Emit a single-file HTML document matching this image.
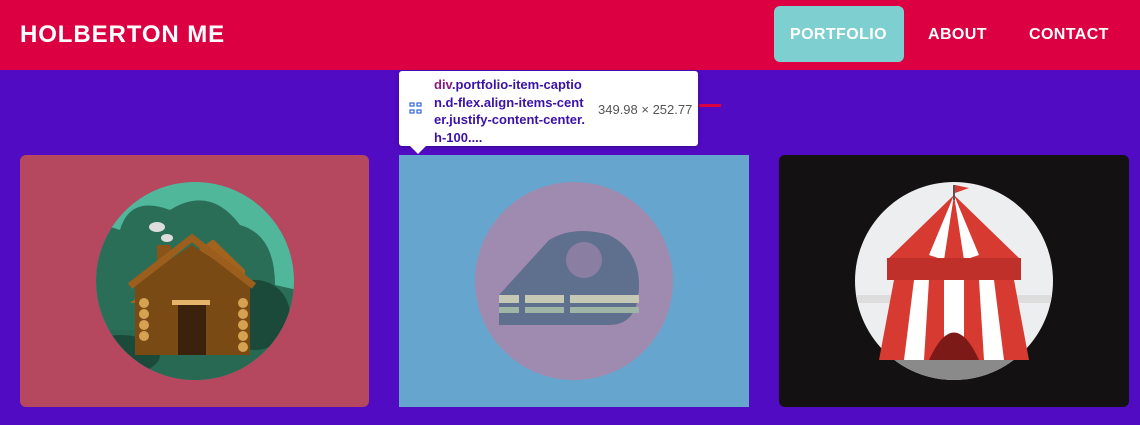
<!DOCTYPE html>
<html><head><style>
body{margin:0;width:1140px;height:425px;background:#500bc3;font-family:"Liberation Sans",sans-serif;position:relative;overflow:hidden}
.nav{position:absolute;left:0;top:0;width:1140px;height:70px;background:#dc0042}
.brand{position:absolute;left:20px;top:21px;color:#fff;font-weight:bold;font-size:24px;letter-spacing:0.9px}
.link{position:absolute;top:26px;color:#fff;font-weight:bold;font-size:16px;letter-spacing:0.4px}
.act{position:absolute;left:774px;top:6px;width:130px;height:56px;background:#7ecfcf;border-radius:6px}
.card{position:absolute;top:155px;height:252px;border-radius:6px;overflow:hidden}
.tip{position:absolute;left:399px;top:71px;width:299px;height:75px;background:#fff;border-radius:3px;box-shadow:0 1px 4px rgba(0,0,0,.3)}
.tip .t{position:absolute;left:35px;top:5px;width:155px;font-size:13px;font-weight:bold;color:#3b12a8;line-height:17.5px;word-break:break-all}
.tip .d{position:absolute;left:199px;top:31px;font-size:13px;color:#555}
.arr{position:absolute;left:410px;top:146px;width:0;height:0;border-left:8px solid transparent;border-right:8px solid transparent;border-top:8px solid #fff}
</style></head><body>
<div class="nav">
<div class="brand">HOLBERTON ME</div>
<div class="act"></div>
<div class="link" style="left:790px">PORTFOLIO</div>
<div class="link" style="left:928px">ABOUT</div>
<div class="link" style="left:1029px">CONTACT</div>
</div>
<div style="position:absolute;left:699px;top:104px;width:22px;height:3px;background:#dc0042"></div>

<div class="card" style="left:20px;width:349px;background:#b5475f">
<svg width="349" height="252"><defs><clipPath id="c1"><circle cx="175" cy="126" r="99"/></clipPath></defs>
<circle cx="175" cy="126" r="99" fill="#50b79b"/>
<g clip-path="url(#c1)">
<path d="M40 230 L40 100 Q60 60 100 75 Q110 40 150 55 Q190 30 220 70 Q255 80 255 130 L300 140 L300 230Z" fill="#2b6e58"/>
<rect x="40" y="175" width="260" height="60" fill="#286953"/>
<ellipse cx="235" cy="160" rx="35" ry="35" fill="#1c4a3a"/>
<ellipse cx="100" cy="200" rx="40" ry="20" fill="#1c4a3a"/>
</g>
<ellipse cx="137" cy="72" rx="8" ry="5" fill="#ddd"/><ellipse cx="147" cy="83" rx="6" ry="4" fill="#ddd"/>
<rect x="137" y="90" width="14" height="35" fill="#8a5418"/>
<path d="M110 148 L192 85 L194 85 L225 115 L225 148Z" fill="#a2631f"/>
<path d="M115 128 L172 90 L230 128 L230 200 L115 200Z" fill="#7a4a14"/>
<path d="M110 131 L172 83 L234 131" stroke="#9b5e1c" stroke-width="7" fill="none"/>
<rect x="158" y="150" width="28" height="50" fill="#3a220d"/>
<rect x="152" y="145" width="38" height="5" fill="#e6b36b"/>
<g fill="#d5a252"><circle cx="124" cy="148" r="5"/><circle cx="124" cy="159" r="5"/><circle cx="124" cy="170" r="5"/><circle cx="124" cy="181" r="5"/><circle cx="223" cy="148" r="5"/><circle cx="223" cy="159" r="5"/><circle cx="223" cy="170" r="5"/><circle cx="223" cy="181" r="5"/><circle cx="223" cy="192" r="5"/></g>
</svg></div>

<div class="card" style="left:399px;width:350px;background:#66a6ce;border-radius:0">
<svg width="350" height="252"><circle cx="175" cy="126" r="99" fill="#a08bb0"/>
<path d="M100 140 L150 85 Q175 70 210 80 Q240 95 240 130 Q240 170 210 170 L100 170Z" fill="#5f6f8e"/>
<circle cx="185" cy="105" r="18" fill="#8a7fa3"/>
<rect x="100" y="140" width="140" height="8" fill="#c5c8b5"/><rect x="100" y="152" width="140" height="6" fill="#9fb5a5"/>
<rect x="120" y="140" width="6" height="22" fill="#5f6f8e"/><rect x="165" y="140" width="6" height="25" fill="#5f6f8e"/>
</svg></div>

<div class="card" style="left:779px;width:350px;background:#131111">
<svg width="350" height="252"><defs><clipPath id="c3"><circle cx="175" cy="126" r="99"/></clipPath></defs>
<circle cx="175" cy="126" r="99" fill="#eceeef"/>
<g clip-path="url(#c3)"><path d="M60 200 L300 200 L300 240 L60 240Z" fill="#8a8a8a"/><rect x="70" y="140" width="220" height="8" fill="#ddd"/></g>
<path d="M108 105 L175 40 L242 105Z" fill="#d63a30"/>
<path d="M150 100 L175 40 L165 105Z M185 105 L175 40 L200 100Z" fill="#fff"/>
<rect x="108" y="103" width="134" height="22" fill="#c0302a"/>
<path d="M115 125 L235 125 L250 205 L100 205Z" fill="#d63a30"/>
<path d="M135 125 L150 125 L145 205 L125 205Z M165 125 L185 125 L185 205 L165 205Z M200 125 L215 125 L225 205 L205 205Z" fill="#fff"/>
<path d="M150 205 Q175 150 200 205Z" fill="#7c1a17"/>
<rect x="174" y="30" width="2" height="15" fill="#555"/><path d="M176 30 L190 33 L176 38Z" fill="#d63a30"/>
</svg></div>

<div class="tip">
<svg style="position:absolute;left:10px;top:31px" width="13" height="13"><g fill="none" stroke="#3465d6" stroke-width="1.2"><rect x="1" y="1" width="4" height="3"/><rect x="8" y="1" width="4" height="3"/><rect x="1" y="8" width="4" height="3"/><rect x="8" y="8" width="4" height="3"/></g></svg>
<div class="t"><span style="color:#8a1a7e">div</span>.portfolio-item-captio n.d-flex.align-items-cent er.justify-content-center. h-100....</div>
<div class="d">349.98 × 252.77</div>
</div>
<div class="arr"></div>
</body></html>
